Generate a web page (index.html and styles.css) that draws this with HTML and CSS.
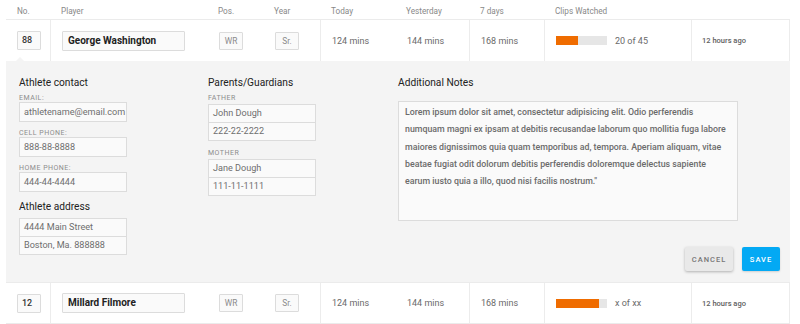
FILE: index.html
```html
<!DOCTYPE html>
<html lang="en">
<head>
    <meta charset="UTF-8">
    <meta name="viewport" content="width=device-width, initial-scale=1.0">
    <title>Roster - Film Study</title>
    <link rel="stylesheet" href="styles.css">
</head>
<body>
    <div class="roster">
        <div class="row head">
            <div class="cell first">No.</div>
            <div class="cell">Player</div>
            <div class="cell">Pos.</div>
            <div class="cell">Year</div>
            <div class="cell">Today</div>
            <div class="cell">Yesterday</div>
            <div class="cell">7 days</div>
            <div class="cell">Clips Watched</div>
            <div class="cell"></div>
        </div>

        <div class="row player">
            <div class="cell sep"><div class="box num">88</div></div>
            <div class="cell"><div class="box name">George Washington</div></div>
            <div class="cell"><div class="box tag">WR</div></div>
            <div class="cell sep"><div class="box tag">Sr.</div></div>
            <div class="cell">124 mins</div>
            <div class="cell sep">144 mins</div>
            <div class="cell sep">168 mins</div>
            <div class="cell sep">
                <div class="bar"><div class="fill" style="width: 43%"></div></div>
                <span class="clips">20 of 45</span>
            </div>
            <div class="cell sep ago">12 hours ago</div>
        </div>

        <div class="details">
            <span class="pointer"></span>
            <div class="group">
                <h3>Athlete contact</h3>
                <div class="label">Email:</div>
                <div class="field">athletename@email.com</div>
                <div class="label">Cell phone:</div>
                <div class="field">888-88-8888</div>
                <div class="label">Home phone:</div>
                <div class="field">444-44-4444</div>
                <h3 class="spaced">Athlete address</h3>
                <div class="stack">
                    <div class="field">4444 Main Street</div>
                    <div class="field">Boston, Ma. 888888</div>
                </div>
            </div>
            <div class="group">
                <h3>Parents/Guardians</h3>
                <div class="label">Father</div>
                <div class="stack">
                    <div class="field">John Dough</div>
                    <div class="field">222-22-2222</div>
                </div>
                <div class="label">Mother</div>
                <div class="stack">
                    <div class="field">Jane Dough</div>
                    <div class="field">111-11-1111</div>
                </div>
            </div>
            <div class="group">
                <h3>Additional Notes</h3>
                <div class="notes">Lorem ipsum dolor sit amet, consectetur adipisicing elit. Odio perferendis<br>numquam magni ex ipsam at debitis recusandae laborum quo mollitia fuga labore<br>maiores dignissimos quia quam temporibus ad, tempora. Aperiam aliquam, vitae<br>beatae fugiat odit dolorum debitis perferendis doloremque delectus sapiente<br>earum iusto quia a illo, quod nisi facilis nostrum."</div>
                <div class="actions">
                    <button class="btn cancel">Cancel</button>
                    <button class="btn save">Save</button>
                </div>
            </div>
        </div>

        <div class="row player last">
            <div class="cell sep"><div class="box num">12</div></div>
            <div class="cell"><div class="box name">Millard Filmore</div></div>
            <div class="cell"><div class="box tag">WR</div></div>
            <div class="cell sep"><div class="box tag">Sr.</div></div>
            <div class="cell">124 mins</div>
            <div class="cell sep">144 mins</div>
            <div class="cell sep">168 mins</div>
            <div class="cell sep">
                <div class="bar"><div class="fill" style="width: 84%"></div></div>
                <span class="clips">x of xx</span>
            </div>
            <div class="cell sep ago">12 hours ago</div>
        </div>
    </div>
</body>
</html>
```

FILE: styles.css
```css
* {
    margin: 0;
    padding: 0;
    box-sizing: border-box;
}

body {
    font-family: 'Roboto', 'Liberation Sans', sans-serif;
    background: #fff;
    color: #666;
    padding-left: 6px;
}

.roster {
    width: 784px;
}

.row {
    display: grid;
    grid-template-columns: 45px 157px 56px 57px 75px 74px 75px 147px 98px;
}

.head {
    height: 19px;
    font-size: 8.2px;
    line-height: 8px;
    color: #888;
}

.head .cell {
    padding: 7px 0 0 10px;
}

.head .cell.first {
    padding-left: 11px;
}

.player {
    border-top: 1px solid #ebebeb;
    height: 42px;
}

.player.last {
    height: 42px;
    border-bottom: 1px solid #ebebeb;
}

.player .cell {
    display: flex;
    align-items: center;
    padding-left: 11px;
    font-size: 9px;
    color: #6a6a6a;
}

.player .cell.sep {
    border-right: 1px solid #ececec;
}

.box {
    border: 1px solid #dcdcdc;
    background: #fafafa;
    border-radius: 1px;
}

.num {
    width: 24px;
    height: 19px;
    line-height: 17px;
    padding-left: 4px;
    font-size: 9px;
    font-weight: 500;
    color: #333;
}

.name {
    width: 123px;
    height: 20px;
    line-height: 18px;
    padding-left: 5px;
    font-size: 10px;
    font-weight: 700;
    color: #222;
}

.tag {
    width: 24px;
    height: 18px;
    line-height: 16px;
    text-align: center;
    font-size: 8.4px;
    color: #8a8a8a;
}

.bar {
    width: 51px;
    height: 9px;
    background: #e6e6e6;
}

.fill {
    height: 100%;
    background: #ef6c00;
}

.clips {
    margin-left: 8px;
}

.player .cell.ago {
    padding-left: 10px;
    font-size: 7.5px;
    font-weight: 500;
    color: #606060;
}

.details {
    position: relative;
    display: grid;
    grid-template-columns: 189px 190px 382px;
    background: #f4f4f4;
    padding: 16px 10px 11px 13px;
}

.pointer {
    position: absolute;
    top: -4px;
    left: 10px;
    border-left: 4px solid transparent;
    border-right: 4px solid transparent;
    border-bottom: 4px solid #f4f4f4;
}

.group h3 {
    font-size: 10.2px;
    line-height: 12px;
    font-weight: 400;
    color: #222;
}

.group h3.spaced {
    margin-top: 9px;
}

.label {
    margin-top: 7px;
    font-size: 7px;
    line-height: 8px;
    letter-spacing: 0.5px;
    text-transform: uppercase;
    color: #8c8c8c;
}

.group h3 + .label {
    margin-top: 5px;
}

.field {
    width: 108px;
    height: 20px;
    line-height: 18px;
    padding-left: 4px;
    border: 1px solid #dcdcdc;
    background: #fafafa;
    font-size: 9.1px;
    color: #6e6e6e;
    white-space: nowrap;
}

.stack {
    margin-top: 2px;
}

.stack .field {
    height: 19px;
    line-height: 17px;
}

.stack .field + .field {
    margin-top: -1px;
}

.group h3 + .stack {
    margin-top: 5px;
}

.stack + .label {
    margin-top: 8px;
}

.label + .stack {
    margin-top: 2px;
}

.notes {
    width: 340px;
    height: 120px;
    margin-top: 12px;
    padding: 2px 6px;
    border: 1px solid #dcdcdc;
    background: #fafafa;
    font-size: 8.8px;
    line-height: 17.3px;
    font-weight: 500;
    color: #6b6b6b;
    white-space: nowrap;
}

.actions {
    display: flex;
    justify-content: flex-end;
    gap: 9px;
    margin-top: 26px;
}

.btn {
    height: 24px;
    border: none;
    border-radius: 2px;
    font-family: inherit;
    font-size: 7.5px;
    font-weight: 500;
    letter-spacing: 1px;
    text-transform: uppercase;
}

.cancel {
    width: 48px;
    background: #e9e9e9;
    color: #777;
    box-shadow: 0 1px 3px rgba(0, 0, 0, 0.28);
}

.save {
    width: 38px;
    background: #03a9f4;
    color: #fff;
    box-shadow: 0 1px 2px rgba(0, 0, 0, 0.15);
}
```
